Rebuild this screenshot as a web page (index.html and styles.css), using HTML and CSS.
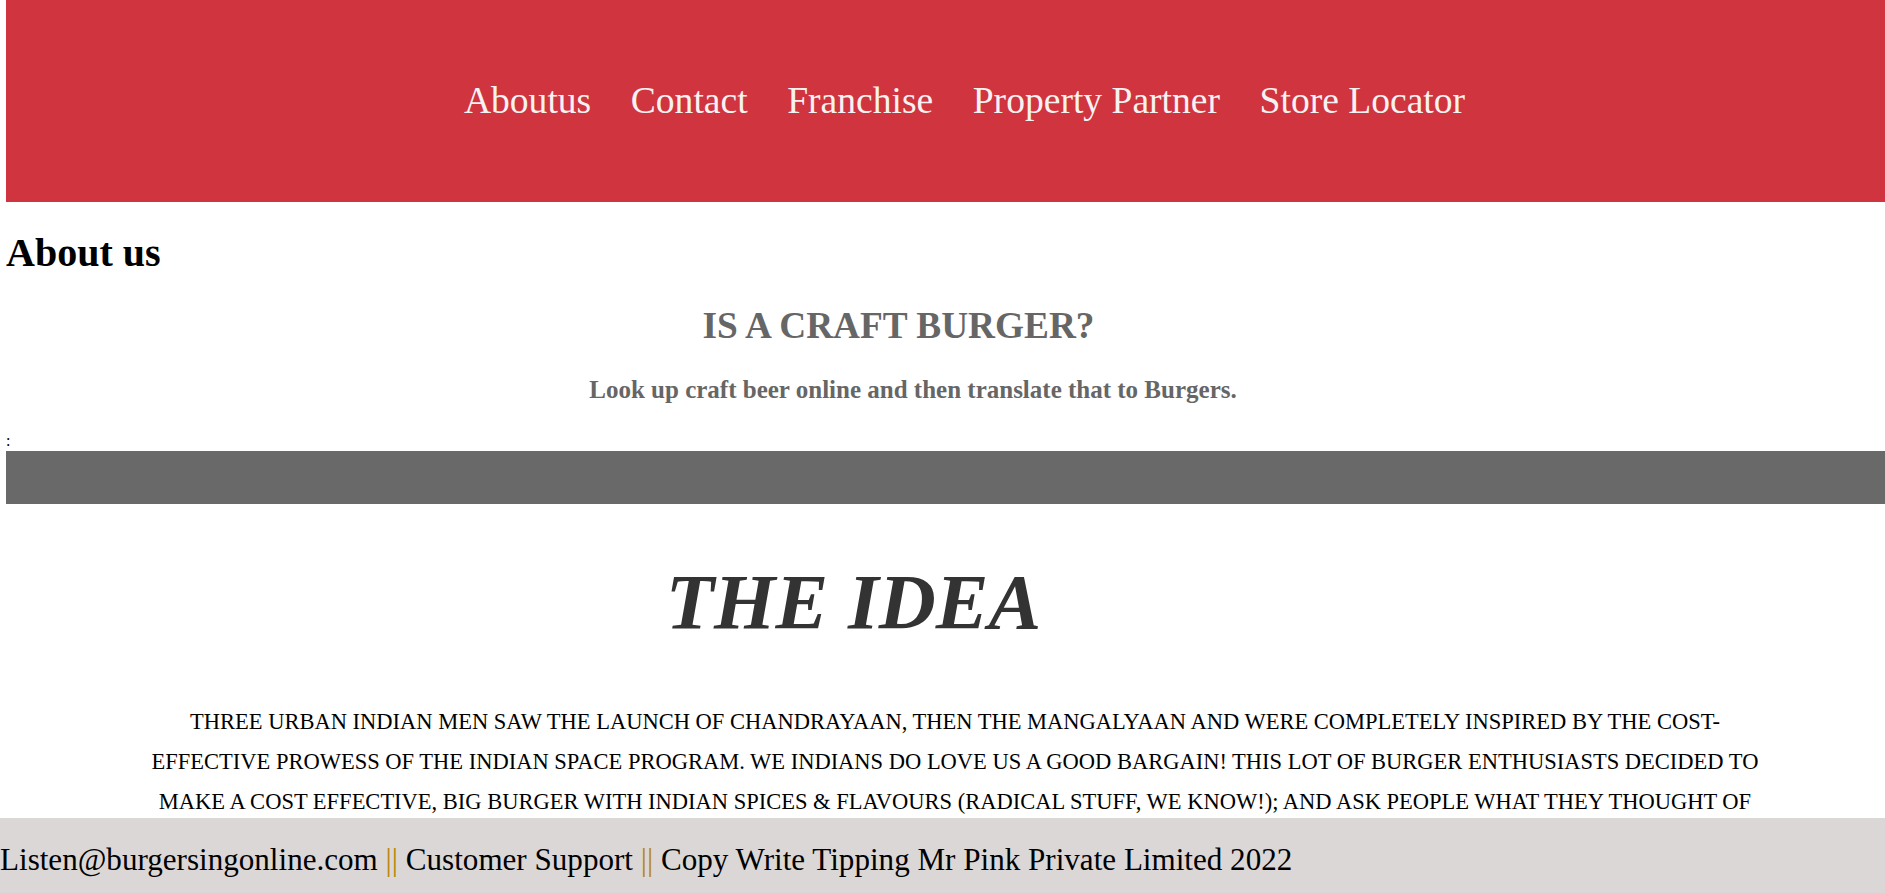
FILE: index.html
```html
<!DOCTYPE html>
<html lang="en">
<head>
<meta charset="utf-8">
<title>About us</title>
<link rel="stylesheet" href="styles.css">
</head>
<body>
<header class="topbar">
  <ul class="nav">
    <li><a href="#">Aboutus</a></li>
    <li><a href="#">Contact</a></li>
    <li><a href="#">Franchise</a></li>
    <li><a href="#">Property Partner</a></li>
    <li><a href="#">Store Locator</a></li>
  </ul>
</header>
<h2 class="page-title">About us</h2>
<h3 class="craft-title">IS A CRAFT BURGER?</h3>
<p class="craft-sub">Look up craft beer online and then translate that to Burgers.</p>
<div class="colon">:</div>
<div class="band"></div>
<h1 class="idea-title">THE IDEA</h1>
<p class="idea-text">THREE URBAN INDIAN MEN SAW THE LAUNCH OF CHANDRAYAAN, THEN THE MANGALYAAN AND WERE COMPLETELY INSPIRED BY THE COST-EFFECTIVE PROWESS OF THE INDIAN SPACE PROGRAM. WE INDIANS DO LOVE US A GOOD BARGAIN! THIS LOT OF BURGER ENTHUSIASTS DECIDED TO MAKE A COST EFFECTIVE, BIG BURGER WITH INDIAN SPICES &amp; FLAVOURS (RADICAL STUFF, WE KNOW!); AND ASK PEOPLE WHAT THEY THOUGHT OF IT. THE RESPONSE WAS OVERWHELMING AND BURGERSING WAS BORN.</p>
<footer class="footer">Listen@burgersingonline.com <span class="sep">||</span> Customer Support <span class="sep">||</span> Copy Write Tipping Mr Pink Private Limited 2022</footer>
</body>
</html>
```

FILE: styles.css
```css
html, body {
  margin: 0;
  padding: 0;
}
body {
  margin-left: 6px;
  font-family: "Liberation Serif", "Times New Roman", serif;
  color: #000;
  background: #fff;
  line-height: 1.15;
}
.topbar {
  height: 202px;
  background: #d0343e;
  display: flex;
  align-items: center;
  justify-content: center;
  padding-left: 38px;
}
.nav {
  list-style: none;
  margin: 0;
  padding: 0;
  display: flex;
  gap: 39.5px;
}
.nav a {
  color: #f6f2f2;
  text-decoration: none;
  font-size: 37.6px;
}
.page-title {
  margin: 28px 0 0 0;
  font-size: 40px;
  font-weight: bold;
}
.craft-title {
  margin: 29px 0 0 0;
  padding-right: 94px;
  text-align: center;
  font-size: 37.3px;
  font-weight: bold;
  color: #666;
}
.craft-sub {
  margin: 28px 0 0 0;
  padding-right: 65px;
  text-align: center;
  font-size: 25px;
  font-weight: bold;
  color: #666;
}
.colon {
  margin-top: 27px;
  font-size: 16px;
  height: 19px;
}
.band {
  height: 53px;
  background: #696969;
}
.idea-title {
  margin: 53px 0 0 0;
  padding-right: 184px;
  text-align: center;
  font-size: 79px;
  font-style: italic;
  font-weight: bold;
  color: #333;
}
.idea-text {
  margin: 55px 0 0 143px;
  width: 1612px;
  text-align: center;
  font-size: 22.5px;
  line-height: 40px;
}
.footer {
  position: fixed;
  left: 0;
  right: 0;
  bottom: 0;
  height: 75px;
  box-sizing: border-box;
  padding-top: 24px;
  background: #dbd7d7;
  font-size: 31.1px;
  white-space: nowrap;
}
.sep {
  color: #b8860b;
}
```
